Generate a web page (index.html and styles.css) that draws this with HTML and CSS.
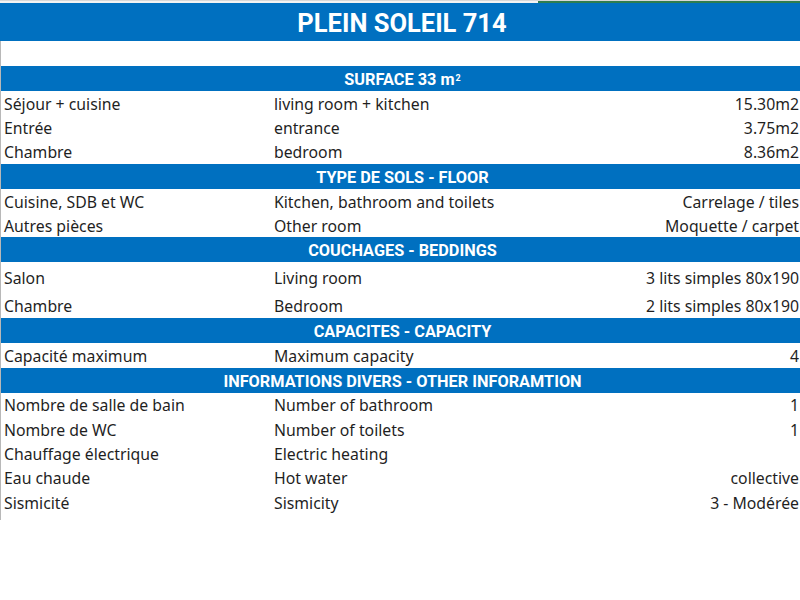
FILE: index.html
```html
<!DOCTYPE html>
<html lang="fr">
<head>
<meta charset="utf-8">
<title>Plein Soleil 714</title>
<link rel="stylesheet" href="styles.css">
</head>
<body>
<div class="topstrip"><div class="tab-line"></div></div>
<div class="title">PLEIN SOLEIL 714</div>
<div class="sheet">
  <div class="blank"></div>
  <div class="head">SURFACE 33 m<sup>2</sup></div>
  <div class="row"><span>Séjour + cuisine</span><span>living room + kitchen</span><span class="val">15.30m2</span></div>
  <div class="row"><span>Entrée</span><span>entrance</span><span class="val">3.75m2</span></div>
  <div class="row"><span>Chambre</span><span>bedroom</span><span class="val">8.36m2</span></div>
  <div class="head">TYPE DE SOLS - FLOOR</div>
  <div class="row"><span>Cuisine, SDB et WC</span><span>Kitchen, bathroom and toilets</span><span class="val">Carrelage / tiles</span></div>
  <div class="row"><span>Autres pièces</span><span>Other room</span><span class="val">Moquette / carpet</span></div>
  <div class="head">COUCHAGES - BEDDINGS</div>
  <div class="row tall"><span>Salon</span><span>Living room</span><span class="val">3 lits simples 80x190</span></div>
  <div class="row tall"><span>Chambre</span><span>Bedroom</span><span class="val">2 lits simples 80x190</span></div>
  <div class="head">CAPACITES - CAPACITY</div>
  <div class="row"><span>Capacité maximum</span><span>Maximum capacity</span><span class="val">4</span></div>
  <div class="head">INFORMATIONS DIVERS - OTHER INFORAMTION</div>
  <div class="row"><span>Nombre de salle de bain</span><span>Number of bathroom</span><span class="val">1</span></div>
  <div class="row"><span>Nombre de WC</span><span>Number of toilets</span><span class="val">1</span></div>
  <div class="row"><span>Chauffage électrique</span><span>Electric heating</span><span class="val"></span></div>
  <div class="row"><span>Eau chaude</span><span>Hot water</span><span class="val">collective</span></div>
  <div class="row"><span>Sismicité</span><span>Sismicity</span><span class="val">3 - Modérée</span></div>
  <div class="tail"></div>
</div>
</body>
</html>
```
FILE: styles.css
```css
html, body {
  margin: 0;
  padding: 0;
  background: #ffffff;
}
body {
  font-family: "Noto Sans", "Open Sans", sans-serif;
  color: #1f1f1f;
  width: 800px;
  overflow: hidden;
}
.topstrip {
  height: 3px;
  background: #f3f3f3;
  border-top: 1px solid #d8d8d8;
  box-sizing: border-box;
  display: flex;
  justify-content: flex-end;
}
.tab-line {
  width: 262px;
  height: 2px;
  background: #2e7d4f;
}
.title {
  height: 38px;
  background: #0070c0;
  color: #ffffff;
  font-family: "Roboto", "Liberation Sans", sans-serif;
  font-weight: 700;
  font-size: 25.5px;
  letter-spacing: 0;
  display: flex;
  align-items: center;
  justify-content: center;
  padding-left: 4px;
  padding-top: 1px;
  box-sizing: border-box;
}
.sheet {
  border-left: 1px solid #b8b8b8;
}
.blank {
  height: 25px;
}
.head {
  height: 25px;
  background: #0070c0;
  color: #ffffff;
  font-family: "Roboto", "Liberation Sans", sans-serif;
  font-weight: 700;
  font-size: 16.3px;
  display: flex;
  align-items: center;
  justify-content: center;
  padding-left: 4px;
  padding-top: 2px;
  box-sizing: border-box;
}
.head sup {
  font-size: 9px;
  line-height: 0;
  position: relative;
  top: -2px;
  margin-left: 1px;
}
.row {
  height: 24.3px;
  display: grid;
  grid-template-columns: 270px 1fr auto;
  align-items: center;
  font-size: 15.8px;
  padding-left: 3px;
  padding-right: 1px;
  padding-top: 1px;
  box-sizing: border-box;
  white-space: nowrap;
}
.row.tall {
  height: 28px;
  padding-top: 4px;
}
.val {
  text-align: right;
}
.tail {
  height: 6px;
}
```
